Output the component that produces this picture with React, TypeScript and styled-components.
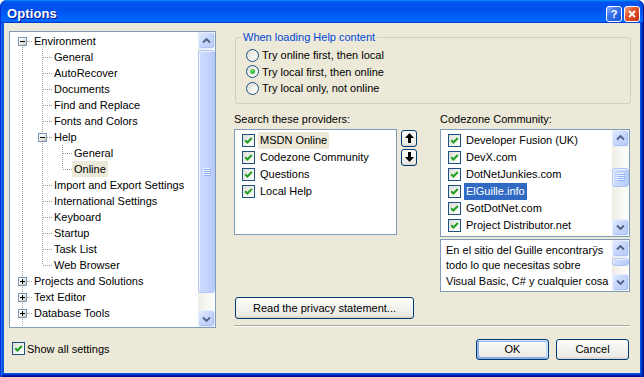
import React from 'react';
import styled, { createGlobalStyle } from 'styled-components';

const GlobalStyle = createGlobalStyle`
  html, body { margin: 0; padding: 0; background: #ffffff; }
  body { font-family: 'Liberation Sans', Arial, sans-serif; font-size: 11px; color: #000; }
  #root { width: 644px; height: 377px; }
  *, *::before, *::after { box-sizing: border-box; }
`;

const Window = styled.div`
  width: 644px;
  height: 377px;
  display: flex;
  flex-direction: column;
`;

const TitleBar = styled.div`
  height: 23px;
  flex: none;
  display: flex;
  align-items: center;
  padding: 4px 4px 0 7px;
  border-radius: 7px 7px 0 0;
  background: linear-gradient(180deg, #0997ff, #0053ee 8%, #0050ee 40%, #0066ff 88%, #0066ff 93%, #005bff 95%, #003dd7 96%, #003dd7);
  box-shadow: inset 1px 0 #0831d9, inset -1px 0 #00138c;
`;

const TitleText = styled.div`
  flex: 1;
  color: #ffffff;
  font-family: 'Liberation Sans', Arial, sans-serif;
  font-weight: bold;
  font-size: 13px;
  letter-spacing: 0.1px;
  text-shadow: 1px 1px #0f1089;
`;

const CaptionButton = styled.div<{ $kind: 'help' | 'close' }>`
  width: 16px;
  height: 16px;
  margin-left: 2px;
  border: 1px solid #ffffff;
  border-radius: 3px;
  display: grid;
  place-items: center;
  color: #ffffff;
  font-weight: bold;
  font-size: 11px;
  background: ${p =>
    p.$kind === 'close'
      ? 'linear-gradient(135deg, #f3a488 0%, #e2532c 40%, #d2401a 75%, #b83210 100%)'
      : 'linear-gradient(135deg, #8cb0f7 0%, #3a72ec 40%, #2560e2 75%, #1a4fd0 100%)'};
`;

const Frame = styled.div`
  flex: 1;
  display: flex;
  padding: 0 4px 4px;
  background: #0855dd;
  box-shadow: inset 1px 0 #0831d9, inset 2px 0 #166aee, inset -1px 0 #00138c, inset -2px 0 #001ea0,
    inset -3px 0 #003bda, inset 0 -1px #00138c, inset 0 -2px #001ea0, inset 0 -3px #003bda;
`;

const Body = styled.div`
  flex: 1;
  display: flex;
  gap: 18px;
  padding: 8px 9px 0 5px;
  background: #ece9d8;
`;

const LeftColumn = styled.div`
  width: 207px;
  flex: none;
  display: flex;
  flex-direction: column;
`;

const RightColumn = styled.div`
  width: 397px;
  flex: none;
  display: flex;
  flex-direction: column;
`;

/* ---------- scrollbar ---------- */

const SBar = styled.div`
  width: 17px;
  flex: none;
  display: flex;
  flex-direction: column;
  background: linear-gradient(90deg, #eeede5 0%, #f8f8f4 60%, #ffffff 100%);
`;

const SButton = styled.div`
  height: 17px;
  flex: none;
  border: 1px solid #e6edfd;
  border-radius: 3px;
  display: grid;
  place-items: center;
  background: linear-gradient(135deg, #e1e9fe 0%, #c8d7fc 45%, #b8cbf7 100%);
  box-shadow: inset -1px -1px #adc2f1;
`;

const SSpace = styled.div<{ $h: number }>`
  height: ${p => p.$h}px;
  flex: none;
`;

const STrack = styled.div`
  flex: 1;
`;

const SThumb = styled.div<{ $h: number }>`
  height: ${p => p.$h}px;
  flex: none;
  border: 1px solid #b0c5f4;
  border-radius: 3px;
  display: grid;
  place-items: center;
  background: linear-gradient(90deg, #cddbfd 0%, #c4d5fc 50%, #b7cbf8 100%);
  box-shadow: inset 1px 1px #eef3ff;
`;

const Chevron = ({ down }: { down?: boolean }) => (
  <svg width="9" height="6" viewBox="0 0 9 6">
    <path
      d={down ? 'M1 1.5 L4.5 5 L8 1.5' : 'M1 4.5 L4.5 1 L8 4.5'}
      fill="none"
      stroke="#4d6185"
      strokeWidth="1.8"
    />
  </svg>
);

const Grip = () => (
  <svg width="8" height="8" viewBox="0 0 8 8">
    {[0, 2, 4, 6].map(y => (
      <React.Fragment key={y}>
        <rect x="0" y={y} width="7" height="1" fill="#eef4fe" />
        <rect x="1" y={y + 1} width="7" height="1" fill="#8cb0f8" />
      </React.Fragment>
    ))}
  </svg>
);

const ScrollBar = ({ offset, thumb }: { offset: number; thumb: number }) => (
  <SBar>
    <SButton>
      <Chevron />
    </SButton>
    <SSpace $h={offset} />
    <SThumb $h={thumb}>{thumb > 12 && <Grip />}</SThumb>
    <STrack />
    <SButton>
      <Chevron down />
    </SButton>
  </SBar>
);

/* ---------- tree ---------- */

const Tree = styled.div`
  height: 297px;
  flex: none;
  display: flex;
  border: 1px solid #7f9db9;
  background: #ffffff;
  overflow: hidden;
`;

const TreeContent = styled.div`
  flex: 1;
  padding: 1px 0 0 2px;
  overflow: hidden;
`;

const TreeRow = styled.div`
  height: 16px;
  display: flex;
`;

const dotsV = 'repeating-linear-gradient(to bottom, #a3a08f 0 1px, transparent 1px 2px)';
const dotsH = 'repeating-linear-gradient(to right, #a3a08f 0 1px, transparent 1px 2px)';

const Cell = styled.div<{ $up: boolean; $down: boolean; $right: boolean }>`
  width: 20px;
  flex: none;
  position: relative;
  &::before {
    content: '';
    display: ${p => (p.$up || p.$down ? 'block' : 'none')};
    position: absolute;
    left: 10px;
    width: 1px;
    top: ${p => (p.$up ? 0 : 8)}px;
    bottom: ${p => (p.$down ? 0 : 8)}px;
    background: ${dotsV};
  }
  &::after {
    content: '';
    display: ${p => (p.$right ? 'block' : 'none')};
    position: absolute;
    left: 11px;
    right: 0;
    top: 8px;
    height: 1px;
    background: ${dotsH};
  }
`;

const Expander = styled.div`
  position: absolute;
  left: 6px;
  top: 4px;
  width: 9px;
  height: 9px;
  z-index: 1;
  border: 1px solid #7898b5;
  background: linear-gradient(135deg, #ffffff 0%, #f0efe8 45%, #c6c2b2 100%);
  display: grid;
  place-items: center;
`;

const ExpanderSign = ({ plus }: { plus?: boolean }) => (
  <svg width="5" height="5" viewBox="0 0 5 5">
    <rect x="0" y="2" width="5" height="1" fill="#000" />
    {plus && <rect x="2" y="0" width="1" height="5" fill="#000" />}
  </svg>
);

const TreeLabel = styled.div<{ $selected?: boolean }>`
  padding: 0 2px;
  line-height: 16px;
  white-space: nowrap;
  background: ${p => (p.$selected ? '#ece9d8' : 'transparent')};
`;

type CellSpec = [boolean, boolean, boolean];
const pipe: CellSpec = [true, true, false];
const tee: CellSpec = [true, true, true];
const corner: CellSpec = [true, false, true];
const first: CellSpec = [false, true, true];

type TreeItem = { label: string; cells: CellSpec[]; expander?: 'minus' | 'plus'; selected?: boolean };

const treeItems: TreeItem[] = [
  { label: 'Environment', cells: [first], expander: 'minus' },
  { label: 'General', cells: [pipe, tee] },
  { label: 'AutoRecover', cells: [pipe, tee] },
  { label: 'Documents', cells: [pipe, tee] },
  { label: 'Find and Replace', cells: [pipe, tee] },
  { label: 'Fonts and Colors', cells: [pipe, tee] },
  { label: 'Help', cells: [pipe, tee], expander: 'minus' },
  { label: 'General', cells: [pipe, pipe, tee] },
  { label: 'Online', cells: [pipe, pipe, corner], selected: true },
  { label: 'Import and Export Settings', cells: [pipe, tee] },
  { label: 'International Settings', cells: [pipe, tee] },
  { label: 'Keyboard', cells: [pipe, tee] },
  { label: 'Startup', cells: [pipe, tee] },
  { label: 'Task List', cells: [pipe, tee] },
  { label: 'Web Browser', cells: [pipe, corner] },
  { label: 'Projects and Solutions', cells: [tee], expander: 'plus' },
  { label: 'Text Editor', cells: [tee], expander: 'plus' },
  { label: 'Database Tools', cells: [tee], expander: 'plus' },
  { label: '', cells: [pipe] },
];

/* ---------- controls ---------- */

const CheckBox = styled.span`
  width: 13px;
  height: 13px;
  flex: none;
  border: 1px solid #1c5180;
  background: linear-gradient(135deg, #dcdcd7 0%, #f4f4f0 60%, #ffffff 100%);
  display: grid;
  place-items: center;
`;

const CheckMark = () => (
  <svg width="11" height="11" viewBox="0 0 11 11">
    <path d="M2.2 5.2 L4.4 7.4 L8.8 3" fill="none" stroke="#21a121" strokeWidth="2.1" />
  </svg>
);

const Checked = () => (
  <CheckBox>
    <CheckMark />
  </CheckBox>
);

const Radio = styled.span<{ $on?: boolean }>`
  width: 13px;
  height: 13px;
  flex: none;
  border-radius: 50%;
  border: 1px solid #1c5180;
  background: linear-gradient(135deg, #dcdcd7 0%, #f2f2ee 55%, #ffffff 100%);
  display: grid;
  place-items: center;
  &::after {
    content: '';
    display: ${p => (p.$on ? 'block' : 'none')};
    width: 5px;
    height: 5px;
    border-radius: 50%;
    background: radial-gradient(circle at 35% 35%, #7be177 0%, #3fbf3b 45%, #1d9a1d 100%);
  }
`;

const XPButton = styled.button<{ $w: number; $h?: number; $default?: boolean }>`
  width: ${p => p.$w}px;
  height: ${p => p.$h ?? 21}px;
  padding: 0;
  font-family: 'Liberation Sans', Arial, sans-serif;
  font-size: 11px;
  color: #000;
  border: 1px solid #003c74;
  border-radius: 3px;
  background: linear-gradient(180deg, #ffffff 0%, #f6f6f3 30%, #ecebe6 86%, #d6d0c5 100%);
  box-shadow: ${p =>
    p.$default
      ? 'inset -1px 1px #cee7ff, inset 1px 2px #98b8ea, inset -2px 2px #bcd4f6, inset 1px -1px #89ade4, inset 2px -2px #89ade4'
      : 'none'};
  display: grid;
  place-items: center;
`;

/* ---------- left column bits ---------- */

const ShowAllRow = styled.label`
  margin: 14px 0 0 3px;
  display: flex;
  align-items: center;
  gap: 2px;
  height: 13px;
`;

/* ---------- right column bits ---------- */

const Group = styled.fieldset`
  margin: 0 0 0 1px;
  padding: 0 10px 6px;
  border: 1px solid #d0d0bf;
  border-radius: 3px;
  min-width: 0;
`;

const Legend = styled.legend`
  margin-left: -5px;
  padding: 0 2px;
  line-height: 13px;
  color: #0046d5;
`;

const RadioList = styled.div`
  padding-top: 3px;
  display: flex;
  flex-direction: column;
`;

const RadioRow = styled.label`
  height: 16.5px;
  display: flex;
  align-items: center;
  gap: 3px;
  white-space: nowrap;
`;

const ProvidersRow = styled.div`
  margin-top: 9px;
  display: flex;
  gap: 23px;
`;

const Block = styled.div<{ $w: number }>`
  width: ${p => p.$w}px;
  flex: none;
  display: flex;
  flex-direction: column;
`;

const Caption = styled.div`
  line-height: 13px;
  white-space: nowrap;
`;

const ListWithButtons = styled.div`
  margin-top: 3px;
  display: flex;
  gap: 4px;
`;

const ListBox = styled.div<{ $w?: number; $h: number; $mt?: number }>`
  ${p => (p.$w ? `width: ${p.$w}px; flex: none;` : '')}
  height: ${p => p.$h}px;
  margin-top: ${p => p.$mt ?? 0}px;
  border: 1px solid #7f9db9;
  background: #ffffff;
  display: flex;
  overflow: hidden;
`;

const ListItems = styled.div`
  flex: 1;
  padding: 2px 0 0 7px;
  overflow: hidden;
`;

const ListItem = styled.div`
  height: 17px;
  display: flex;
  align-items: center;
  gap: 3px;
`;

const ItemLabel = styled.span<{ $state?: 'inactive' | 'active' }>`
  height: 17px;
  line-height: 17px;
  padding: 0 2px;
  white-space: nowrap;
  background: ${p => (p.$state === 'active' ? '#316ac5' : p.$state === 'inactive' ? '#ece9d8' : 'transparent')};
  color: ${p => (p.$state === 'active' ? '#ffffff' : '#000000')};
`;

const MoveButtons = styled.div`
  margin-top: 1px;
  display: flex;
  flex-direction: column;
  gap: 2px;
`;

const Arrow = ({ down }: { down?: boolean }) => (
  <svg width="9" height="10" viewBox="0 0 9 10">
    <polygon
      points={down ? '3,0 6,0 6,5 9,5 4.5,10 0,5 3,5' : '4.5,0 9,5 6,5 6,10 3,10 3,5 0,5'}
      fill="#000"
    />
  </svg>
);

const Description = styled.div`
  flex: 1;
  padding: 3px 2px 0 5px;
  line-height: 15.5px;
  overflow: hidden;
`;

const PrivacyRow = styled.div`
  margin: 5px 0 0 1px;
`;

const Separator = styled.div`
  margin-top: 6px;
  width: 396px;
  height: 2px;
  border-top: 1px solid #aca899;
  border-bottom: 1px solid #ffffff;
`;

const ButtonRow = styled.div`
  margin-top: 12px;
  padding-right: 2px;
  display: flex;
  justify-content: flex-end;
  gap: 7px;
`;

const providers: { label: string; state?: 'inactive' | 'active' }[] = [
  { label: 'MSDN Online', state: 'inactive' },
  { label: 'Codezone Community' },
  { label: 'Questions' },
  { label: 'Local Help' },
];

const community: { label: string; state?: 'inactive' | 'active' }[] = [
  { label: 'Developer Fusion (UK)' },
  { label: 'DevX.com' },
  { label: 'DotNetJunkies.com' },
  { label: 'ElGuille.info', state: 'active' },
  { label: 'GotDotNet.com' },
  { label: 'Project Distributor.net' },
];

export default function App() {
  return (
    <>
      <GlobalStyle />
      <Window>
        <TitleBar>
          <TitleText>Options</TitleText>
          <CaptionButton $kind="help">?</CaptionButton>
          <CaptionButton $kind="close">
            <svg width="8" height="8" viewBox="0 0 8 8">
              <path d="M1 1 L7 7 M7 1 L1 7" stroke="#fff" strokeWidth="1.8" />
            </svg>
          </CaptionButton>
        </TitleBar>
        <Frame>
          <Body>
            <LeftColumn>
              <Tree>
                <TreeContent>
                  {treeItems.map((item, i) => (
                    <TreeRow key={i}>
                      {item.cells.map((c, j) => (
                        <Cell key={j} $up={c[0]} $down={c[1]} $right={c[2]}>
                          {item.expander && j === item.cells.length - 1 && (
                            <Expander>
                              <ExpanderSign plus={item.expander === 'plus'} />
                            </Expander>
                          )}
                        </Cell>
                      ))}
                      {item.label && <TreeLabel $selected={item.selected}>{item.label}</TreeLabel>}
                    </TreeRow>
                  ))}
                </TreeContent>
                <ScrollBar offset={1} thumb={243} />
              </Tree>
              <ShowAllRow>
                <Checked />
                <span>Show all settings</span>
              </ShowAllRow>
            </LeftColumn>

            <RightColumn>
              <Group>
                <Legend>When loading Help content</Legend>
                <RadioList>
                  <RadioRow>
                    <Radio />
                    Try online first, then local
                  </RadioRow>
                  <RadioRow>
                    <Radio $on />
                    Try local first, then online
                  </RadioRow>
                  <RadioRow>
                    <Radio />
                    Try local only, not online
                  </RadioRow>
                </RadioList>
              </Group>

              <ProvidersRow>
                <Block $w={183}>
                  <Caption>Search these providers:</Caption>
                  <ListWithButtons>
                    <ListBox $w={163} $h={106}>
                      <ListItems>
                        {providers.map(p => (
                          <ListItem key={p.label}>
                            <Checked />
                            <ItemLabel $state={p.state}>{p.label}</ItemLabel>
                          </ListItem>
                        ))}
                      </ListItems>
                    </ListBox>
                    <MoveButtons>
                      <XPButton $w={16} $h={17}>
                        <Arrow />
                      </XPButton>
                      <XPButton $w={16} $h={17}>
                        <Arrow down />
                      </XPButton>
                    </MoveButtons>
                  </ListWithButtons>
                </Block>

                <Block $w={190}>
                  <Caption>Codezone Community:</Caption>
                  <ListBox $h={108} $mt={3}>
                    <ListItems>
                      {community.map(c => (
                        <ListItem key={c.label}>
                          <Checked />
                          <ItemLabel $state={c.state}>{c.label}</ItemLabel>
                        </ListItem>
                      ))}
                    </ListItems>
                    <ScrollBar offset={21} thumb={19} />
                  </ListBox>
                  <ListBox $h={53} $mt={2}>
                    <Description>
                      En el sitio del Guille encontrarÿs todo lo que necesitas sobre Visual Basic, C# y
                      cualquier cosa
                    </Description>
                    <ScrollBar offset={1} thumb={8} />
                  </ListBox>
                </Block>
              </ProvidersRow>

              <PrivacyRow>
                <XPButton $w={179} $h={22}>
                  Read the privacy statement...
                </XPButton>
              </PrivacyRow>
              <Separator />
              <ButtonRow>
                <XPButton $w={73} $default>
                  OK
                </XPButton>
                <XPButton $w={73}>Cancel</XPButton>
              </ButtonRow>
            </RightColumn>
          </Body>
        </Frame>
      </Window>
    </>
  );
}
